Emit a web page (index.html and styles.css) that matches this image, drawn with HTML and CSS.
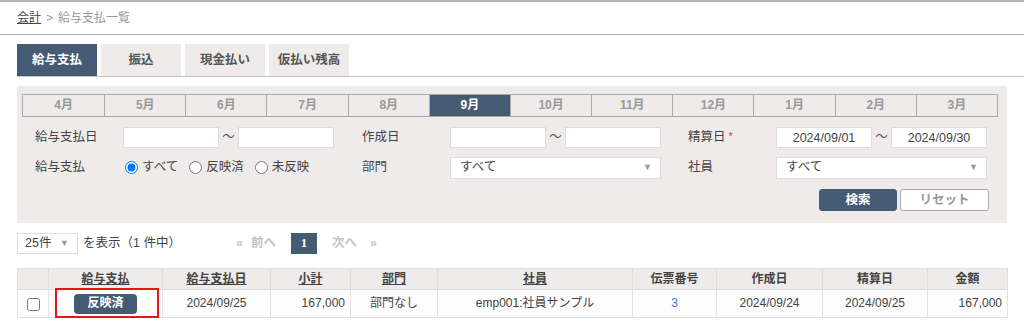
FILE: index.html
```html
<!DOCTYPE html>
<html lang="ja">
<head>
<meta charset="utf-8">
<title>給与支払一覧</title>
<link rel="stylesheet" href="styles.css">
</head>
<body>
<div class="topline"></div>
<nav class="crumbs"><a href="#" class="crumb-link">会計</a><span class="crumb-sep">&gt;</span><span class="crumb-cur">給与支払一覧</span></nav>
<main class="content">
  <div class="tabs">
    <a class="tab active" href="#">給与支払</a>
    <a class="tab" href="#">振込</a>
    <a class="tab" href="#">現金払い</a>
    <a class="tab" href="#">仮払い残高</a>
  </div>

  <section class="filter">
    <div class="months">
      <span class="month">4月</span><span class="month">5月</span><span class="month">6月</span><span class="month">7月</span><span class="month">8月</span><span class="month current">9月</span><span class="month">10月</span><span class="month">11月</span><span class="month">12月</span><span class="month">1月</span><span class="month">2月</span><span class="month">3月</span>
    </div>
    <div class="fgrid">
      <div class="field">
        <label class="flabel">給与支払日</label>
        <div class="range"><input class="date" type="text"><span class="tilde">～</span><input class="date" type="text"></div>
      </div>
      <div class="field">
        <label class="flabel">作成日</label>
        <div class="range"><input class="date" type="text"><span class="tilde">～</span><input class="date" type="text"></div>
      </div>
      <div class="field">
        <label class="flabel">精算日<span class="req">*</span></label>
        <div class="range"><input class="date" type="text" value="2024/09/01"><span class="tilde">～</span><input class="date" type="text" value="2024/09/30"></div>
      </div>
      <div class="field">
        <label class="flabel">給与支払</label>
        <div class="radios">
          <label class="radio"><input type="radio" name="st" checked>すべて</label>
          <label class="radio"><input type="radio" name="st">反映済</label>
          <label class="radio"><input type="radio" name="st">未反映</label>
        </div>
      </div>
      <div class="field">
        <label class="flabel">部門</label>
        <div class="select wide"><span>すべて</span><span class="caret">▼</span></div>
      </div>
      <div class="field">
        <label class="flabel">社員</label>
        <div class="select wide"><span>すべて</span><span class="caret">▼</span></div>
      </div>
    </div>
    <div class="factions">
      <button class="btn primary" type="button">検索</button>
      <button class="btn reset" type="button">リセット</button>
    </div>
  </section>

  <div class="pager">
    <div class="select small"><span>25件</span><span class="caret">▼</span></div>
    <span class="count">を表示（1 件中）</span>
    <div class="pages">
      <span class="pg-dis">«</span>
      <span class="pg-dis">前へ</span>
      <span class="pg-cur">1</span>
      <span class="pg-dis">次へ</span>
      <span class="pg-dis">»</span>
    </div>
  </div>

  <table class="list">
    <colgroup>
      <col class="c-chk"><col class="c-st"><col class="c-date"><col class="c-sub"><col class="c-dept"><col class="c-emp"><col class="c-no"><col class="c-cr"><col class="c-st2"><col class="c-amt">
    </colgroup>
    <thead>
      <tr>
        <th></th>
        <th><a href="#" class="sort">給与支払</a></th>
        <th><a href="#" class="sort">給与支払日</a></th>
        <th><a href="#" class="sort">小計</a></th>
        <th><a href="#" class="sort">部門</a></th>
        <th><a href="#" class="sort">社員</a></th>
        <th>伝票番号</th>
        <th>作成日</th>
        <th>精算日</th>
        <th>金額</th>
      </tr>
    </thead>
    <tbody>
      <tr>
        <td class="center"><input type="checkbox" class="chk"></td>
        <td class="center status-cell"><span class="badge">反映済</span><span class="mark"></span></td>
        <td class="center">2024/09/25</td>
        <td class="right">167,000</td>
        <td class="center">部門なし</td>
        <td class="center">emp001:社員サンプル</td>
        <td class="center"><a href="#" class="link">3</a></td>
        <td class="center">2024/09/24</td>
        <td class="center">2024/09/25</td>
        <td class="right">167,000</td>
      </tr>
    </tbody>
  </table>
</main>
</body>
</html>
```

FILE: styles.css
```css
* { box-sizing: border-box; }
html, body { margin: 0; padding: 0; background: #fff; }
body {
  font-family: "Liberation Sans", "Noto Sans CJK JP", sans-serif;
  font-size: 12.5px;
  color: #333;
  line-height: 1.2;
}
.topline { height: 2px; background: #b4b4b4; }

.crumbs {
  height: 33px;
  border-bottom: 1px solid #aaa;
  padding: 0 17px;
  display: flex;
  align-items: center;
  font-size: 12px;
}
.crumb-link { color: #444; text-decoration: underline; }
.crumb-sep { color: #999; margin: 0 5px; }
.crumb-cur { color: #999; }

.content { padding: 9px 17px 0 17px; }

.tabs {
  display: flex;
  gap: 4px;
  border-bottom: 1px solid #c8c8c8;
  margin-right: -17px;
}
.tab {
  width: 80px;
  height: 32px;
  display: flex;
  align-items: center;
  justify-content: center;
  background: #eeebea;
  color: #555;
  font-weight: bold;
  font-size: 12.5px;
  text-decoration: none;
}
.tab.active { background: #455a73; color: #fff; }

.filter {
  margin-top: 9px;
  background: #eeebea;
  padding: 8px 9px 12px 5px;
}
.months {
  display: grid;
  grid-template-columns: repeat(12, 1fr);
  border: 1px solid #aaa;
  height: 23px;
}
.month {
  display: flex;
  align-items: center;
  justify-content: center;
  color: #999;
  font-weight: bold;
  font-size: 12px;
  border-left: 1px solid #aaa;
}
.month:first-child { border-left: none; }
.month.current { background: #455a73; color: #fff; }

.fgrid {
  display: grid;
  grid-template-columns: 327px 326px 326px;
  row-gap: 9px;
  margin-top: 10px;
  padding-left: 13px;
}
.field { display: flex; align-items: center; height: 21px; }
.flabel { width: 88px; flex: none; color: #444; }
.req { color: #d33; font-size: 11px; margin-left: 3px; vertical-align: top; }
.range { display: flex; align-items: center; }
.date {
  width: 96px;
  height: 21px;
  border: 1px solid #ddd;
  background: #fff;
  font: inherit;
  font-size: 12.5px;
  color: #444;
  text-align: center;
  padding: 0;
  margin: 0;
}
.tilde { width: 19px; text-align: center; color: #555; }
.radios { display: flex; align-items: center; gap: 9px; color: #444; }
.radio { display: flex; align-items: center; }
.radio input { margin: 0 4px 0 2px; width: 13px; height: 13px; }

.select {
  height: 21px;
  border: 1px solid #ddd;
  background: #fff;
  display: flex;
  align-items: center;
  justify-content: space-between;
  padding: 0 8px 0 9px;
  color: #444;
}
.select.wide { width: 211px; height: 22px; }
.caret { color: #999; font-size: 9px; }

.factions {
  display: flex;
  justify-content: flex-end;
  gap: 3px;
  margin-top: 11px;
  padding-right: 9px;
}
.btn {
  height: 22px;
  border-radius: 3px;
  font: inherit;
  font-size: 12.5px;
  font-weight: bold;
  padding: 0;
  cursor: pointer;
}
.btn.primary { width: 78px; background: #455a73; color: #fff; border: 1px solid #455a73; }
.btn.reset { width: 89px; background: #fff; color: #999; border: 1px solid #aaa; }

.pager {
  margin-top: 9px;
  display: flex;
  align-items: center;
  height: 22px;
}
.select.small { width: 61px; padding: 0 8px 0 7px; }
.count { margin-left: 5px; color: #444; }
.pages {
  display: flex;
  align-items: center;
  margin-left: 55px;
  font-weight: bold;
}
.pg-dis { color: #c4c4c4; font-size: 12.5px; }
.pages .pg-dis:first-child { margin-right: 8px; }
.pg-cur {
  width: 26px;
  height: 21px;
  margin: 0 15px;
  background: #455a73;
  color: #fff;
  display: flex;
  align-items: center;
  justify-content: center;
  font-family: "Liberation Serif", serif;
  font-size: 13px;
}
.pages .pg-dis:last-child { margin-left: 13px; }

.list {
  margin-top: 14px;
  width: 990px;
  border-collapse: collapse;
  table-layout: fixed;
  font-size: 12px;
}
.c-chk { width: 31px; }
.c-st { width: 114px; }
.c-date { width: 108px; }
.c-sub { width: 80px; }
.c-dept { width: 87px; }
.c-emp { width: 195px; }
.c-no { width: 84px; }
.c-cr { width: 106px; }
.c-st2 { width: 105px; }
.c-amt { width: 80px; }
.list th {
  height: 21px;
  background: #eeebea;
  border: 1px solid #ddd;
  border-top: 1px solid #e4e2e1;
  font-weight: bold;
  color: #444;
  text-align: center;
  padding: 0;
}
.sort { color: #444; text-decoration: underline; }
.list td {
  height: 28px;
  border: 1px solid #e2e2e2;
  background: #fdfdfd;
  padding: 0 5px;
  color: #444;
}
.center { text-align: center; }
.right { text-align: right; }
.chk { margin: 0; width: 13px; height: 13px; vertical-align: middle; }
.link { color: #3a7fc1; text-decoration: none; }
.status-cell { position: relative; }
.badge {
  display: inline-flex;
  align-items: center;
  justify-content: center;
  width: 63px;
  height: 20px;
  border-radius: 4px;
  background: #455a73;
  color: #fff;
  font-weight: bold;
  font-size: 12px;
}
.mark {
  position: absolute;
  left: 6px;
  top: -2px;
  width: 104px;
  height: 30px;
  border: 2px solid #e8141a;
}
```
